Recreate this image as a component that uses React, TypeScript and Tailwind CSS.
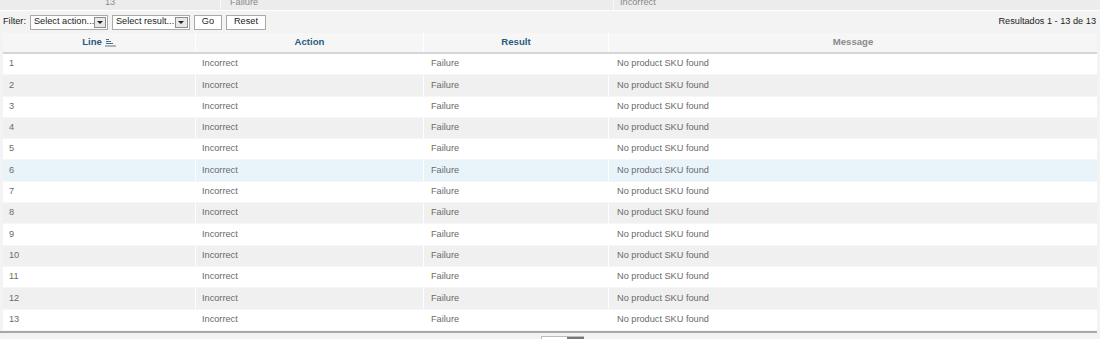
const rows = Array.from({ length: 13 }, (_, i) => i + 1);

const cols = ['w-[193px]', 'w-[228px]', 'w-[185px]', 'flex-1'];

function SortIcon() {
    return (
        <svg width="11" height="9" viewBox="0 0 11 9" className="ml-[3px]">
            <path d="M1 1.5h3M1 3.5h5M1 5.5h7" stroke="#4a6f88" strokeWidth="1" />
            <path d="M0 8h11" stroke="#6f8ea3" strokeWidth="1.2" />
        </svg>
    );
}

function FakeSelect({ label, width }: { label: string; width: string }) {
    return (
        <div className={`flex items-center justify-between h-[15px] border border-[#a9a9a9] bg-white pl-[3px] pr-[1px] ${width}`}>
            <span className="leading-none whitespace-nowrap text-[#222]">{label}</span>
            <span className="flex items-center justify-center w-[13px] h-[11px] border border-[#8d8d8d] bg-[#e8e8e8]">
                <span className="w-0 h-0 border-l-[3px] border-r-[3px] border-t-[3px] border-l-transparent border-r-transparent border-t-[#222] mt-[1px]" />
            </span>
        </div>
    );
}

export default function App() {
    return (
        <div className="w-[1100px] h-[339px] overflow-hidden bg-[#f3f3f3] text-[9.2px]" style={{ fontFamily: '"Liberation Sans", Arial, sans-serif' }}>
            {/* tail of the previous row */}
            <div className="h-[11px] overflow-hidden flex border-b border-white bg-[#ececec] text-[#888]">
                <div className="w-[221px] border-r border-[#f8f8f8] flex justify-center">
                    <div className="h-[20px] -mt-[7px] flex items-center">13</div>
                </div>
                <div className="w-[393px] border-r border-[#f8f8f8] pl-[9px]">
                    <div className="h-[20px] -mt-[7px] flex items-center">Failure</div>
                </div>
                <div className="flex-1 pl-[6px]">
                    <div className="h-[20px] -mt-[7px] flex items-center">Incorrect</div>
                </div>
            </div>

            {/* filter bar */}
            <div className="h-[22px] flex items-center justify-between pl-[3px] pr-[4px] text-[#222]">
                <div className="flex items-center gap-[4px]">
                    <span>Filter:</span>
                    <FakeSelect label="Select action..." width="w-[78px]" />
                    <FakeSelect label="Select result..." width="w-[78px]" />
                    <button className="h-[15px] w-[28px] border border-[#a9a9a9] bg-white text-[9.2px] leading-none">Go</button>
                    <button className="h-[15px] w-[40px] border border-[#a9a9a9] bg-white text-[9.2px] leading-none">Reset</button>
                </div>
                <span>Resultados 1 - 13 de 13</span>
            </div>

            <div className="ml-[3px] w-[1094px] bg-white">
                {/* header */}
                <div className="flex h-[21px] bg-[#f6f6f6] border-b-2 border-[#d6d6d6] font-bold text-[9.6px]">
                    <div className={`${cols[0]} flex items-center justify-center border-r border-white text-[#2b5d7e]`}>
                        Line<SortIcon />
                    </div>
                    <div className={`${cols[1]} flex items-center justify-center border-r border-white text-[#2b5d7e]`}>Action</div>
                    <div className={`${cols[2]} flex items-center justify-center border-r border-white text-[#2b5d7e]`}>Result</div>
                    <div className={`${cols[3]} flex items-center justify-center text-[#8a8a8a]`}>Message</div>
                </div>

                {/* rows */}
                {rows.map((n) => {
                    const bg = n === 6 ? 'bg-[#e9f4fa]' : n % 2 === 0 ? 'bg-[#f0f0f0]' : 'bg-white';
                    return (
                        <div key={n} className={`flex h-[21.3px] border-b border-[#f7f7f7] text-[#6a6a6a] ${bg}`}>
                            <div className={`${cols[0]} flex items-center pl-[6px] border-r border-white`}>{n}</div>
                            <div className={`${cols[1]} flex items-center pl-[6px] border-r border-white`}>Incorrect</div>
                            <div className={`${cols[2]} flex items-center pl-[7px] border-r border-white`}>Failure</div>
                            <div className={`${cols[3]} flex items-center pl-[8px]`}>No product SKU found</div>
                        </div>
                    );
                })}
            </div>
            <div className="w-[1097px] h-[2px] bg-[#a8a8a8]" />

            {/* pager peeking in */}
            <div className="flex justify-center pt-[3px] pl-[24px]">
                <div className="flex h-[6px] w-[43px] border-t border-l border-[#bbb] bg-white">
                    <div className="flex-1" />
                    <div className="w-[17px] bg-[#777]" />
                </div>
            </div>
        </div>
    );
}
